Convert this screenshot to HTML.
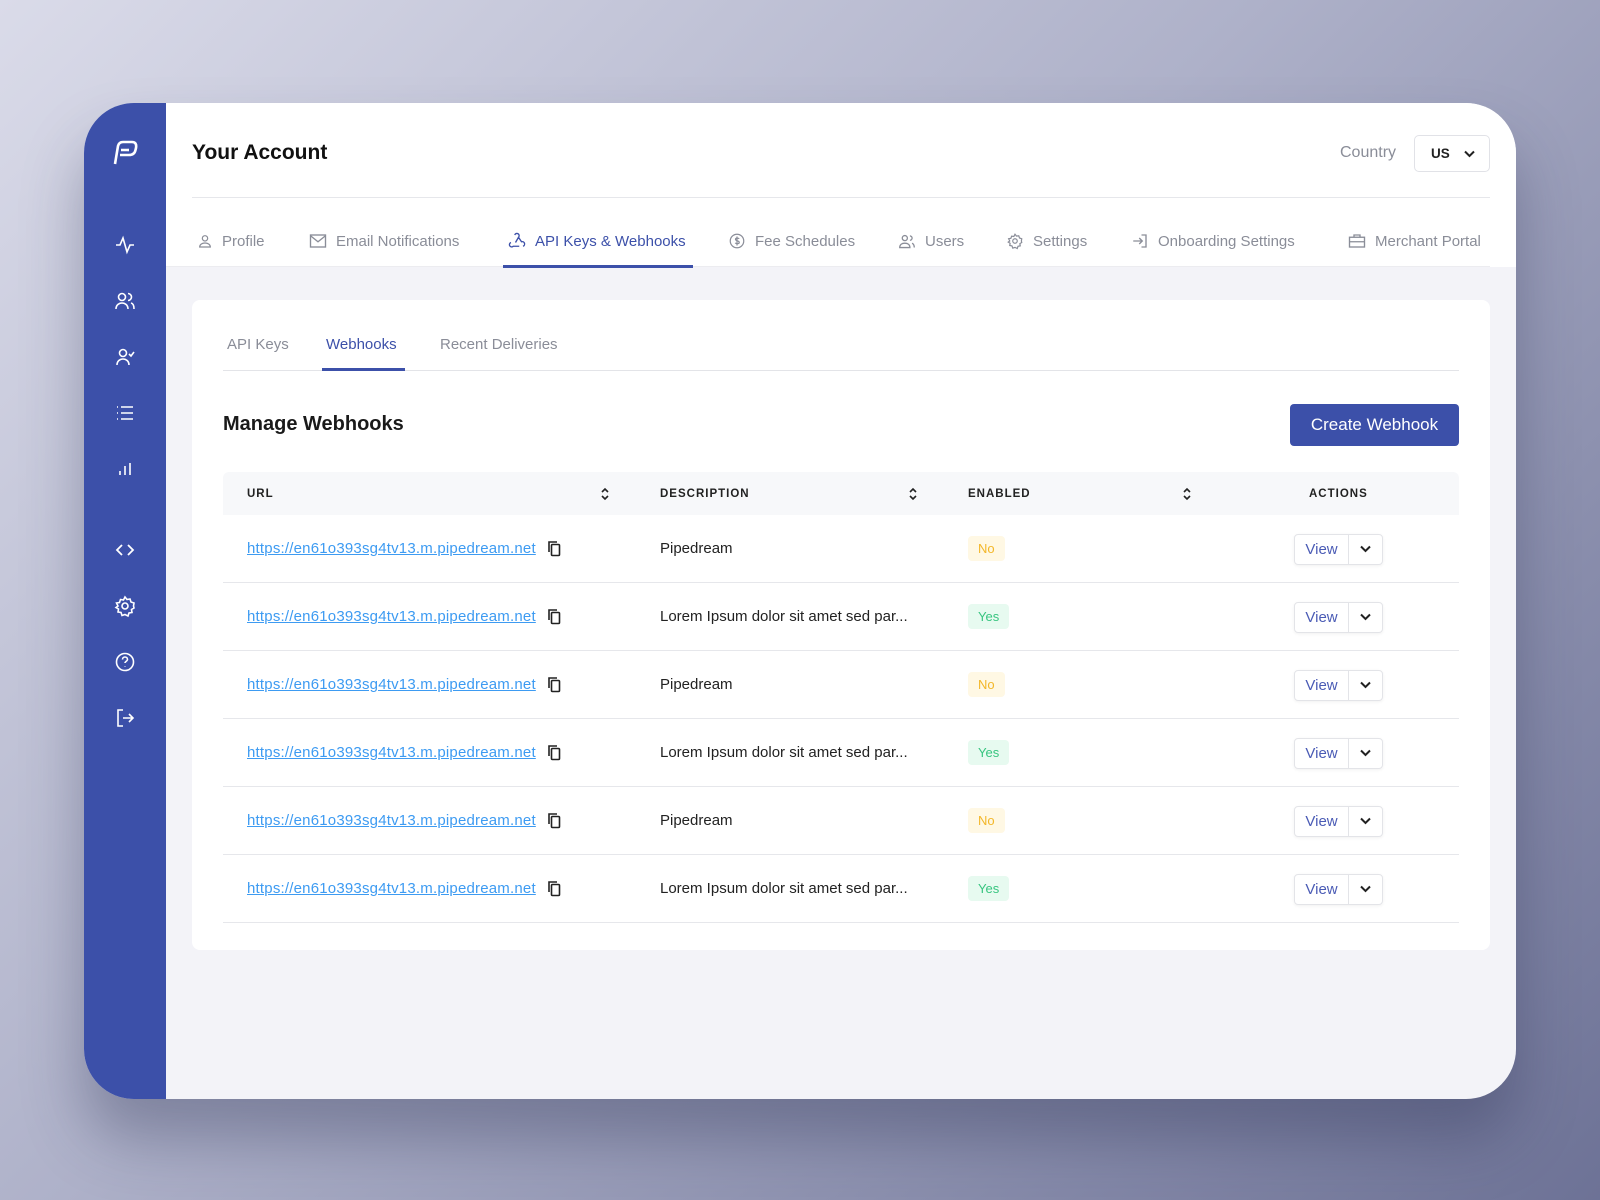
<!DOCTYPE html>
<html><head><meta charset="utf-8"><style>
*{box-sizing:border-box;margin:0;padding:0}
body{width:1600px;height:1200px;overflow:hidden;font-family:"Liberation Sans",sans-serif;background:linear-gradient(135deg,#dadbe9 0%,#aeb1c9 45%,#6d7296 100%);position:relative}
.card{position:absolute;left:84px;top:103px;width:1432px;height:996px;border-radius:50px;overflow:hidden;background:#f3f3f8;box-shadow:0 40px 60px rgba(40,45,80,.35)}
.side{position:absolute;left:0;top:0;width:82px;height:100%;background:#3c50a9}
.ico{position:absolute;left:29px;width:24px;height:24px}
.hdr{position:absolute;left:82px;top:0;right:0;height:164px;background:#fff}
.abs{position:absolute}
.tab{position:absolute;top:128px;height:20px;font-size:15px;color:#8a8d98;display:flex;align-items:center;gap:9px;white-space:nowrap}
.inner{position:absolute;left:108px;top:197px;width:1298px;height:650px;background:#fff;border-radius:8px}
.th{position:absolute;font-size:11.5px;font-weight:bold;letter-spacing:1px;color:#222}
.row{position:absolute;left:31px;width:1236px;height:68px;border-bottom:1px solid #e6e7eb}
.url{position:absolute;left:24px;top:25px;color:#3d9bf2;text-decoration:underline;font-size:15px;letter-spacing:.2px}
.cp{position:absolute;left:324px;top:25px}
.desc{position:absolute;left:437px;top:25px;font-size:15px;color:#222}
.badge{position:absolute;left:745px;top:21px;height:25px;padding:0 10px;border-radius:4px;font-size:13px;line-height:25px}
.no{background:#fff8e4;color:#f3b72a}.yes{background:#e7faf0;color:#38c580}
.vb{position:absolute;left:1071px;top:19px;width:89px;height:31px;border:1px solid #e3e4e8;border-radius:4px;box-shadow:0 1px 3px rgba(0,0,0,.06);font-size:15px;color:#4a5bb5}
.vb span{position:absolute;left:0;top:0;width:54px;height:29px;line-height:29px;text-align:center;border-right:1px solid #e3e4e8}
.vb svg{position:absolute;left:65px;top:10px}
</style></head><body>
<div class="card">
<div class="side">
<svg class="ico" style="top:34px;left:24px;width:32px;height:32px" viewBox="0 0 32 32" fill="none" stroke="#fff" stroke-width="2.6" stroke-linejoin="round"><path d="M7 27 L10 9 Q11 5 15 5 H24 Q29 5 28 11 L27.5 13 Q26.5 18 21 18 H12"/><path d="M13 13 H21"/></svg>
<svg class="ico" style="top:130px" viewBox="0 0 24 24" fill="none" stroke="#fff" stroke-width="1.6"><path d="M3 12h4l3-7 4 14 3-7h4"/></svg>
<svg class="ico" style="top:186px" viewBox="0 0 24 24" fill="none" stroke="#fff" stroke-width="1.6"><circle cx="9" cy="8" r="3.5"/><path d="M3 20c0-4 3-6 6-6s6 2 6 6M15 4.5a3.5 3.5 0 010 7M18 14c2 .5 3 3 3 6"/></svg>
<svg class="ico" style="top:242px" viewBox="0 0 24 24" fill="none" stroke="#fff" stroke-width="1.6"><circle cx="10" cy="8" r="3.5"/><path d="M4 20c0-4 3-6 6-6s6 2 6 6M16 9l2 2 3-4"/></svg>
<svg class="ico" style="top:298px" viewBox="0 0 24 24" fill="none" stroke="#fff" stroke-width="1.6"><path d="M8 6h12M8 12h12M8 18h12M4 6h1M4 12h1M4 18h1"/></svg>
<svg class="ico" style="top:354px" viewBox="0 0 24 24" fill="none" stroke="#fff" stroke-width="1.6"><path d="M7 18v-4M12 18V9M17 18V6"/></svg>
<svg class="ico" style="top:435px" viewBox="0 0 24 24" fill="none" stroke="#fff" stroke-width="1.8"><path d="M9 7l-5 5 5 5M15 7l5 5-5 5"/></svg>
<svg class="ico" style="top:491px" viewBox="0 0 24 24" fill="none" stroke="#fff" stroke-width="1.6"><circle cx="12" cy="12" r="3"/><path d="M12 3l2 2.5 3-.5 1 3 3 1-.5 3L21 14l-2.5 1.5.5 3-3 .5-1 3-3-1.5L9 21.5l-1-3-3-.5.5-3L3 13.5 5 12 3.5 9l3-.5 1-3 3 .5z"/></svg>
<svg class="ico" style="top:547px" viewBox="0 0 24 24" fill="none" stroke="#fff" stroke-width="1.6"><circle cx="12" cy="12" r="8.5"/><path d="M9.5 9.5a2.5 2.5 0 115 0c0 1.5-2.5 2-2.5 3.5M12 16.5v.5"/></svg>
<svg class="ico" style="top:603px" viewBox="0 0 24 24" fill="none" stroke="#fff" stroke-width="1.6"><path d="M10 4H5v16h5M10 12h10M16 8l4 4-4 4"/></svg>
</div>
<div class="hdr">
<div class="abs" style="left:26px;top:38px;font-size:21px;font-weight:bold;color:#111">Your Account</div>
<div class="abs" style="left:1174px;top:41px;font-size:16px;color:#8a8d98">Country</div>
<div class="abs" style="left:1248px;top:32px;width:76px;height:37px;border:1px solid #e1e2e7;border-radius:5px;font-size:13.5px;font-weight:bold;color:#222;padding:10px 0 0 16px">US<svg style="position:absolute;right:14px;top:14px" width="11" height="8" viewBox="0 0 11 8" fill="none" stroke="#222" stroke-width="2"><path d="M1 1.5l4.5 4.5 4.5-4.5"/></svg></div>
<div class="abs" style="left:26px;top:94px;width:1298px;height:1px;background:#e6e7eb"></div>
<div class="abs" style="left:0;top:163px;width:1324px;height:1px;background:#ececf0"></div>
<div class="tab" style="left:31px"><svg width="16" height="16" viewBox="0 0 24 24" fill="none" stroke="#8a8d98" stroke-width="1.8"><circle cx="12" cy="8" r="4"/><path d="M4 21c0-4 4-6 8-6s8 2 8 6z"/></svg>Profile</div>
<div class="tab" style="left:143px"><svg width="18" height="16" viewBox="0 0 24 20" fill="none" stroke="#8a8d98" stroke-width="1.8"><rect x="2" y="2" width="20" height="16"/><path d="M2 3l10 8 10-8"/></svg>Email Notifications</div>
<div class="tab" style="left:342px;color:#3c50a9"><svg width="18" height="18" viewBox="0 0 24 24" fill="none" stroke="#3c50a9" stroke-width="1.8"><path d="M9 4a3 3 0 115 3l-4 7M4 14a3 3 0 103 5h8M20 19a3 3 0 10-2-6l-4-6"/></svg>API Keys &amp; Webhooks</div>
<div class="abs" style="left:337px;top:162px;width:190px;height:3px;background:#3c50a9"></div>
<div class="tab" style="left:562px"><svg width="18" height="18" viewBox="0 0 24 24" fill="none" stroke="#8a8d98" stroke-width="1.6"><circle cx="12" cy="12" r="9"/><path d="M15 9c-1-1-5-1.5-5 .8s5 1.5 5 4-4 2-5.5.8M12 6v12"/></svg>Fee Schedules</div>
<div class="tab" style="left:732px"><svg width="18" height="16" viewBox="0 0 24 22" fill="none" stroke="#8a8d98" stroke-width="1.8"><circle cx="9" cy="7" r="3.5"/><path d="M2 20c0-4 3-6 7-6s7 2 7 6zM16 4a3 3 0 010 6M19 14c2 1 3 3 3 6"/></svg>Users</div>
<div class="tab" style="left:840px"><svg width="18" height="18" viewBox="0 0 24 24" fill="none" stroke="#8a8d98" stroke-width="1.6"><circle cx="12" cy="12" r="3"/><path d="M12 3l2 2.5 3-.5 1 3 3 1-.5 3L21 14l-2.5 1.5.5 3-3 .5-1 3-3-1.5L9 21.5l-1-3-3-.5.5-3L3 13.5 5 12 3.5 9l3-.5 1-3 3 .5z"/></svg>Settings</div>
<div class="tab" style="left:965px"><svg width="18" height="18" viewBox="0 0 24 24" fill="none" stroke="#8a8d98" stroke-width="1.8"><path d="M14 4h6v16h-6M3 12h12M11 8l4 4-4 4"/></svg>Onboarding Settings</div>
<div class="tab" style="left:1182px"><svg width="18" height="16" viewBox="0 0 24 20" fill="none" stroke="#8a8d98" stroke-width="1.8"><rect x="2" y="5" width="20" height="13"/><path d="M8 5V2h8v3M2 11h20"/></svg>Merchant Portal</div>
</div>
<div class="inner">
<div class="abs" style="left:35px;top:36px;font-size:15px;color:#8a8d98">API Keys</div>
<div class="abs" style="left:134px;top:36px;font-size:15px;color:#3c50a9">Webhooks</div>
<div class="abs" style="left:248px;top:36px;font-size:15px;color:#8a8d98">Recent Deliveries</div>
<div class="abs" style="left:31px;top:70px;width:1236px;height:1px;background:#e3e4e8"></div>
<div class="abs" style="left:130px;top:68px;width:83px;height:3px;background:#3c50a9"></div>
<div class="abs" style="left:31px;top:113px;font-size:20px;font-weight:bold;color:#1a1a1a">Manage Webhooks</div>
<div class="abs" style="left:1098px;top:104px;width:169px;height:42px;background:#3c50a9;border-radius:4px;color:#fff;font-size:17px;text-align:center;line-height:42px">Create Webhook</div>
<div class="abs" style="left:31px;top:172px;width:1236px;height:43px;background:#f7f8fa;border-radius:6px 6px 0 0"></div>
<div class="th" style="left:55px;top:188px">URL</div>
<div class="th" style="left:468px;top:188px">DESCRIPTION</div>
<div class="th" style="left:776px;top:188px">ENABLED</div>
<div class="th" style="left:1117px;top:188px">ACTIONS</div>
<svg class="abs" style="left:408px;top:186px" width="10" height="16" viewBox="0 0 10 16" fill="none" stroke="#222" stroke-width="1.6"><path d="M2 6l3-3 3 3M2 10l3 3 3-3"/></svg>
<svg class="abs" style="left:716px;top:186px" width="10" height="16" viewBox="0 0 10 16" fill="none" stroke="#222" stroke-width="1.6"><path d="M2 6l3-3 3 3M2 10l3 3 3-3"/></svg>
<svg class="abs" style="left:990px;top:186px" width="10" height="16" viewBox="0 0 10 16" fill="none" stroke="#222" stroke-width="1.6"><path d="M2 6l3-3 3 3M2 10l3 3 3-3"/></svg>

<div class="row" style="top:215px"><span class="url">https://en61o393sg4tv13.m.pipedream.net</span><svg class="cp" width="14" height="17" viewBox="0 0 14 17" fill="none" stroke="#222" stroke-width="1.6"><path d="M2 12V2h8"/><rect x="4.5" y="4.5" width="8" height="11" rx="1"/></svg><span class="desc">Pipedream</span><span class="badge no">No</span><div class="vb"><span>View</span><svg width="11" height="8" viewBox="0 0 11 8" fill="none" stroke="#222" stroke-width="2"><path d="M1 1.5l4.5 4.5 4.5-4.5"/></svg></div></div>
<div class="row" style="top:283px"><span class="url">https://en61o393sg4tv13.m.pipedream.net</span><svg class="cp" width="14" height="17" viewBox="0 0 14 17" fill="none" stroke="#222" stroke-width="1.6"><path d="M2 12V2h8"/><rect x="4.5" y="4.5" width="8" height="11" rx="1"/></svg><span class="desc">Lorem Ipsum dolor sit amet sed par...</span><span class="badge yes">Yes</span><div class="vb"><span>View</span><svg width="11" height="8" viewBox="0 0 11 8" fill="none" stroke="#222" stroke-width="2"><path d="M1 1.5l4.5 4.5 4.5-4.5"/></svg></div></div>
<div class="row" style="top:351px"><span class="url">https://en61o393sg4tv13.m.pipedream.net</span><svg class="cp" width="14" height="17" viewBox="0 0 14 17" fill="none" stroke="#222" stroke-width="1.6"><path d="M2 12V2h8"/><rect x="4.5" y="4.5" width="8" height="11" rx="1"/></svg><span class="desc">Pipedream</span><span class="badge no">No</span><div class="vb"><span>View</span><svg width="11" height="8" viewBox="0 0 11 8" fill="none" stroke="#222" stroke-width="2"><path d="M1 1.5l4.5 4.5 4.5-4.5"/></svg></div></div>
<div class="row" style="top:419px"><span class="url">https://en61o393sg4tv13.m.pipedream.net</span><svg class="cp" width="14" height="17" viewBox="0 0 14 17" fill="none" stroke="#222" stroke-width="1.6"><path d="M2 12V2h8"/><rect x="4.5" y="4.5" width="8" height="11" rx="1"/></svg><span class="desc">Lorem Ipsum dolor sit amet sed par...</span><span class="badge yes">Yes</span><div class="vb"><span>View</span><svg width="11" height="8" viewBox="0 0 11 8" fill="none" stroke="#222" stroke-width="2"><path d="M1 1.5l4.5 4.5 4.5-4.5"/></svg></div></div>
<div class="row" style="top:487px"><span class="url">https://en61o393sg4tv13.m.pipedream.net</span><svg class="cp" width="14" height="17" viewBox="0 0 14 17" fill="none" stroke="#222" stroke-width="1.6"><path d="M2 12V2h8"/><rect x="4.5" y="4.5" width="8" height="11" rx="1"/></svg><span class="desc">Pipedream</span><span class="badge no">No</span><div class="vb"><span>View</span><svg width="11" height="8" viewBox="0 0 11 8" fill="none" stroke="#222" stroke-width="2"><path d="M1 1.5l4.5 4.5 4.5-4.5"/></svg></div></div>
<div class="row" style="top:555px"><span class="url">https://en61o393sg4tv13.m.pipedream.net</span><svg class="cp" width="14" height="17" viewBox="0 0 14 17" fill="none" stroke="#222" stroke-width="1.6"><path d="M2 12V2h8"/><rect x="4.5" y="4.5" width="8" height="11" rx="1"/></svg><span class="desc">Lorem Ipsum dolor sit amet sed par...</span><span class="badge yes">Yes</span><div class="vb"><span>View</span><svg width="11" height="8" viewBox="0 0 11 8" fill="none" stroke="#222" stroke-width="2"><path d="M1 1.5l4.5 4.5 4.5-4.5"/></svg></div></div>
</div>
</div>
</body></html>
